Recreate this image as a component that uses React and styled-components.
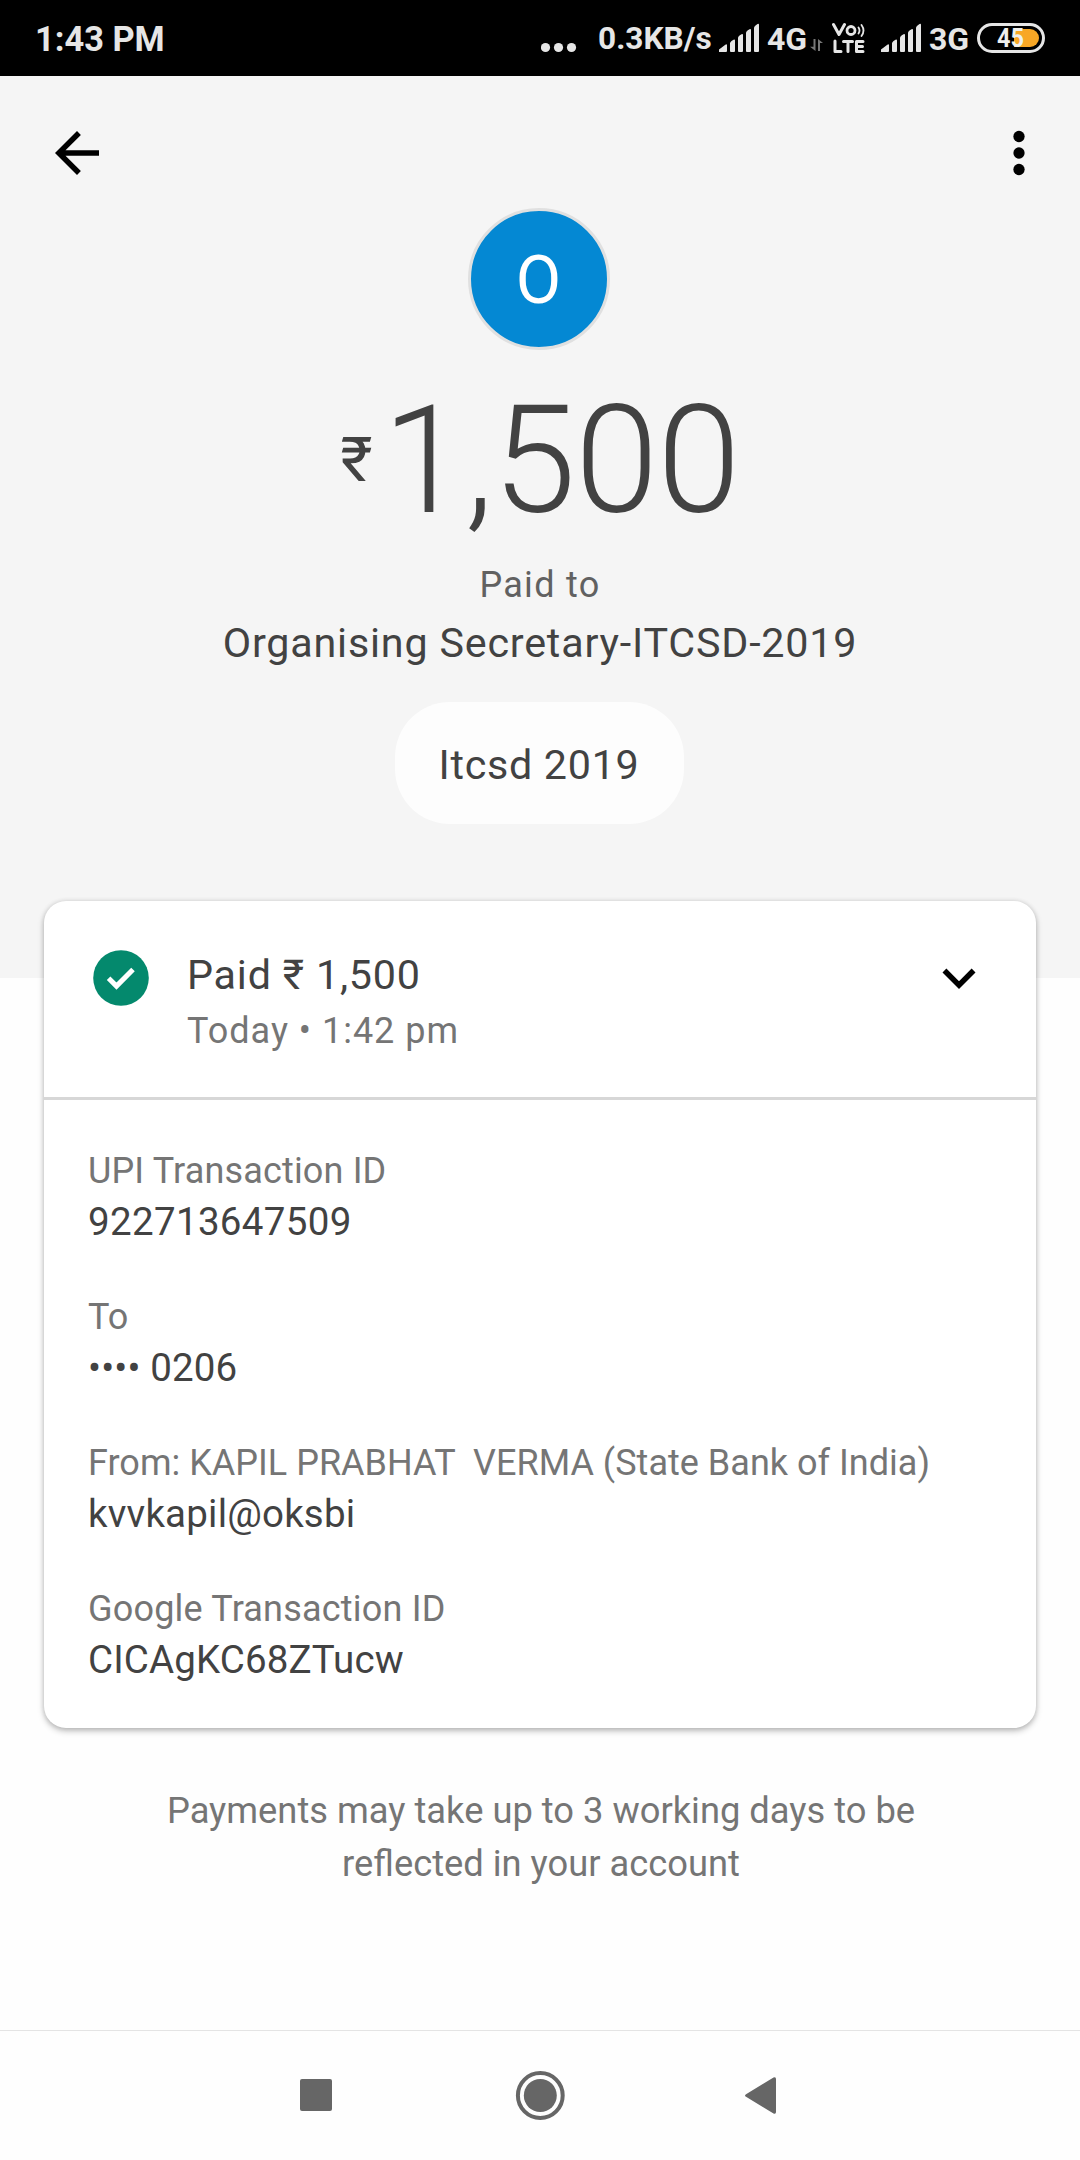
import React from "react";
import styled, { createGlobalStyle } from "styled-components";

const GlobalStyle = createGlobalStyle`
  * { box-sizing: border-box; }
  body { margin: 0; background: #fefefe; font-family: Roboto, "Noto Sans", sans-serif; }
  svg { display: block; flex: none; }
`;

const Screen = styled.div`
  width: 1080px;
  height: 2160px;
  display: flex;
  flex-direction: column;
  overflow: hidden;
`;

const StatusBar = styled.header`
  height: 76px;
  flex: none;
  display: flex;
  align-items: flex-start;
  justify-content: space-between;
  padding: 20px 35px 0 35px;
  background: #000;
  color: #e6e6e6;
`;

const StatusGroup = styled.div`
  display: flex;
  align-items: flex-start;
`;

const StatusText = styled.span`
  font-size: ${(p) => p.$size || 32}px;
  font-weight: 700;
  line-height: 38px;
  width: ${(p) => (p.$width ? `${p.$width}px` : "auto")};
  white-space: nowrap;
`;

const StatusIcon = styled.svg`
  margin: 0 ${(p) => p.$right || 0}px 0 ${(p) => p.$left || 0}px;
`;

const Hero = styled.section`
  height: 902px;
  flex: none;
  display: flex;
  flex-direction: column;
  align-items: center;
  background: #f5f5f5;
  color: #424242;
`;

const Toolbar = styled.nav`
  align-self: stretch;
  display: flex;
  justify-content: space-between;
  padding: 44px 28px 0 44px;
`;

const IconButton = styled.button`
  width: 66px;
  height: 66px;
  padding: 0;
  border: 0;
  background: none;
  color: #000;
`;

const Avatar = styled.div`
  width: 142px;
  height: 142px;
  margin: 22px 2px 0 0;
  padding-right: 1px;
  border: 3px solid #e0e0e0;
  border-radius: 50%;
  background: #0488d3;
  color: #fff;
  font-size: 66px;
  line-height: 140px;
  text-align: center;
`;

const Amount = styled.div`
  display: flex;
  align-items: flex-start;
  margin-top: 36px;
`;

const Currency = styled.span`
  margin: 43px 10px 0 0;
  font-size: 62px;
  line-height: 62px;
`;

const Figure = styled.span`
  font-size: 150px;
  font-weight: 300;
  line-height: 150px;
  letter-spacing: -0.9px;
`;

const Caption = styled.div`
  margin-top: 28px;
  color: #616161;
  font-size: 36px;
  line-height: 42px;
  letter-spacing: 1.3px;
`;

const Payee = styled.div`
  margin-top: 13px;
  font-size: 41.25px;
  line-height: 48px;
  letter-spacing: 0.8px;
`;

const Chip = styled.div`
  width: 289px;
  height: 122px;
  margin: 35px 2px 0 0;
  padding-top: 3px;
  border-radius: 55px;
  background: #fdfdfd;
  font-size: 41.25px;
  line-height: 120px;
  letter-spacing: 0.7px;
  text-align: center;
`;

const Card = styled.section`
  height: 827px;
  flex: none;
  margin: -77px 44px 0;
  border-radius: 22px;
  background: #fff;
  box-shadow: 0 3px 6px rgba(0, 0, 0, 0.26), 0 0 5px rgba(0, 0, 0, 0.11);
`;

const CardHeader = styled.div`
  height: 199px;
  display: flex;
  align-items: flex-start;
  padding: 0 44px 0 49px;
  border-bottom: 3px solid #d7d7d7;
`;

const CheckIcon = styled.svg`
  margin-top: 49px;
`;

const Summary = styled.div`
  flex: 1;
  margin: 50px 0 0 38px;
`;

const Title = styled.div`
  color: #424242;
  font-size: 41.25px;
  line-height: 48px;
  letter-spacing: 0.8px;
`;

const Subtitle = styled.div`
  margin-top: 11px;
  color: #757575;
  font-size: 36px;
  line-height: 42px;
  letter-spacing: 1px;
`;

const ExpandButton = styled(IconButton)`
  margin-top: 44px;
`;

const Details = styled.dl`
  display: flex;
  flex-direction: column;
  gap: 51px;
  margin: 0;
  padding: 50px 44px 0;
`;

const Label = styled.dt`
  color: #757575;
  font-size: 36px;
  line-height: 42px;
  letter-spacing: ${(p) => p.$tracking || 0}px;
  white-space: pre;
`;

const Value = styled.dd`
  margin: 7px 0 0;
  color: #424242;
  font-size: 38.5px;
  line-height: 46px;
  letter-spacing: ${(p) => p.$tracking || 0}px;
`;

const Notice = styled.p`
  width: 800px;
  margin: 56px auto 0;
  padding-left: 2px;
  color: #757575;
  font-size: 36.3px;
  line-height: 53px;
  text-align: center;
`;

const NavBar = styled.footer`
  height: 130px;
  flex: none;
  display: flex;
  align-items: center;
  justify-content: center;
  gap: 174px;
  margin-top: auto;
  padding-bottom: 1px;
  border-top: 1px solid #e4e4e4;
  color: #666;
`;

const Signal = ({ left, right }) => (
  <StatusIcon $left={left} $right={right} width="40" height="38" viewBox="0 0 40 38" fill="#e6e6e6">
    <path d="M0 32v-2.5l6-4.5q2-1.500 2 .5V31q0 1-1 1zM11 23.500q0-1.500 1.500-2.500l2-1.300q1.500-.7 1.500.8V31q0 1-1 1h-3q-1 0-1-1zM19 18q0-1.500 1.500-2.500l2-1.300q1.500-.7 1.500.8V31q0 1-1 1h-3q-1 0-1-1zM27 13q0-1.500 1.500-2.500l2-1.300q1.500-.7 1.500.8V31q0 1-1 1h-3q-1 0-1-1zM35 8q0-1.500 1.500-2.500l2-1.500q1.500-.7 1.500.8V31q0 1-1 1h-3q-1 0-1-1z" />
  </StatusIcon>
);

const details = [
  { label: "UPI Transaction ID", labelTracking: 0.16, value: "922713647509", valueTracking: 0.34 },
  { label: "To", labelTracking: 0, value: "•••• 0206", valueTracking: 0.15 },
  {
    label: "From: KAPIL PRABHAT  VERMA (State Bank of India)",
    labelTracking: 0.02,
    value: "kvvkapil@oksbi",
    valueTracking: 0.2,
  },
  { label: "Google Transaction ID", labelTracking: 0.2, value: "CICAgKC68ZTucw", valueTracking: 0.14 },
];

export default function App() {
  return (
    <>
      <GlobalStyle />
      <Screen>
        <StatusBar>
          <StatusText $size={34.4}>1:43 PM</StatusText>
          <StatusGroup>
            <StatusIcon width="36" height="38" viewBox="0 0 36 38" fill="#e6e6e6" $right={21}>
              <circle cx="4.500" cy="27.500" r="4.600" />
              <circle cx="17.500" cy="27.500" r="4.600" />
              <circle cx="30.500" cy="27.500" r="4.600" />
            </StatusIcon>
            <StatusText $size={31.6} $width={113}>0.3KB/s</StatusText>
            <Signal left={8} right={8} />
            <StatusText $width={43}>4G</StatusText>
            <StatusIcon width="13" height="38" viewBox="0 0 13 38" fill="#777">
              <path d="M3.500 19h2v12L0 26.800h3.500zM8 31h2V23h3L8 19z" />
            </StatusIcon>
            <StatusIcon width="33" height="38" viewBox="0 0 33 38" fill="none" stroke="#e6e6e6" strokeLinecap="round" strokeLinejoin="round" $left={9} $right={16}>
              <path strokeWidth="3" d="M1.500 4.500L7 14.500l5.500-10M3 21v10.500h6M11.500 21.500h9M16 21.500v10M31 21.500h-6.500v10H31M24.500 26.500h6" />
              <circle cx="19" cy="10.500" r="4" strokeWidth="2.800" />
              <path strokeWidth="1.800" d="M26.500 7.500q2 3 0 6M29.500 5q4 5.500 0 11" />
            </StatusIcon>
            <Signal right={8} />
            <StatusText $width={48}>3G</StatusText>
            <StatusIcon width="68" height="38" viewBox="0 0 68 38">
              <rect x="1.500" y="4.500" width="65" height="27" rx="13.500" fill="none" stroke="#e6e6e6" strokeWidth="3" />
              <path d="M37 9h16a9 9 0 0 1 0 18H37z" fill="#f8a725" />
              <text x="33.500" y="26.500" textAnchor="middle" fill="#f0efed" fontFamily="Roboto, sans-serif" fontSize="25" fontWeight="700" textLength="27" lengthAdjust="spacingAndGlyphs">45</text>
            </StatusIcon>
          </StatusGroup>
        </StatusBar>

        <Hero>
          <Toolbar>
            <IconButton aria-label="Back">
              <svg width="66" height="66" viewBox="0 0 24 24" fill="currentColor">
                <path d="M20 11H7.830l5.590-5.590L12 4l-8 8 8 8 1.410-1.410L7.830 13H20v-2z" />
              </svg>
            </IconButton>
            <IconButton aria-label="More options">
              <svg width="66" height="66" viewBox="0 0 24 24" fill="currentColor">
                <circle cx="12" cy="6" r="2.050" />
                <circle cx="12" cy="12" r="2.050" />
                <circle cx="12" cy="18" r="2.050" />
              </svg>
            </IconButton>
          </Toolbar>
          <Avatar>O</Avatar>
          <Amount>
            <Currency>₹</Currency>
            <Figure>1,500</Figure>
          </Amount>
          <Caption>Paid to</Caption>
          <Payee>Organising Secretary-ITCSD-2019</Payee>
          <Chip>Itcsd 2019</Chip>
        </Hero>

        <Card>
          <CardHeader>
            <CheckIcon width="56" height="56" viewBox="0 0 56 56">
              <circle cx="28" cy="28" r="27.800" fill="#04896d" />
              <path d="M15.600 28.200l7.900 7.900L40 19.600" fill="none" stroke="#fff" strokeWidth="5" strokeLinejoin="miter" />
            </CheckIcon>
            <Summary>
              <Title>Paid ₹ 1,500</Title>
              <Subtitle>Today • 1:42 pm</Subtitle>
            </Summary>
            <ExpandButton aria-label="Expand">
              <svg width="66" height="66" viewBox="0 0 24 24" fill="currentColor">
                <path d="M16.590 8.590L12 13.170 7.410 8.590 6 10l6 6 6-6z" />
              </svg>
            </ExpandButton>
          </CardHeader>
          <Details>
            {details.map((d) => (
              <div key={d.label}>
                <Label $tracking={d.labelTracking}>{d.label}</Label>
                <Value $tracking={d.valueTracking}>{d.value}</Value>
              </div>
            ))}
          </Details>
        </Card>

        <Notice>
          Payments may take up to 3 working days to be
          <br />
          reflected in your account
        </Notice>

        <NavBar>
          <svg width="50" height="50" viewBox="0 0 50 50" fill="currentColor">
            <rect x="9" y="9" width="32" height="32" rx="2" />
          </svg>
          <svg width="50" height="50" viewBox="0 0 50 50" fill="currentColor">
            <circle cx="25.300" cy="25.500" r="22.400" fill="none" stroke="currentColor" strokeWidth="4" />
            <circle cx="25.300" cy="25.500" r="16.500" />
          </svg>
          <svg width="50" height="50" viewBox="0 0 50 50" fill="currentColor">
            <path d="M7 24.200L34.500 7.500q2.500-1 2.500 1.500v33q0 2.500-2.500 1.500L7 26.800q-2-1.300 0-2.600z" />
          </svg>
        </NavBar>
      </Screen>
    </>
  );
}
